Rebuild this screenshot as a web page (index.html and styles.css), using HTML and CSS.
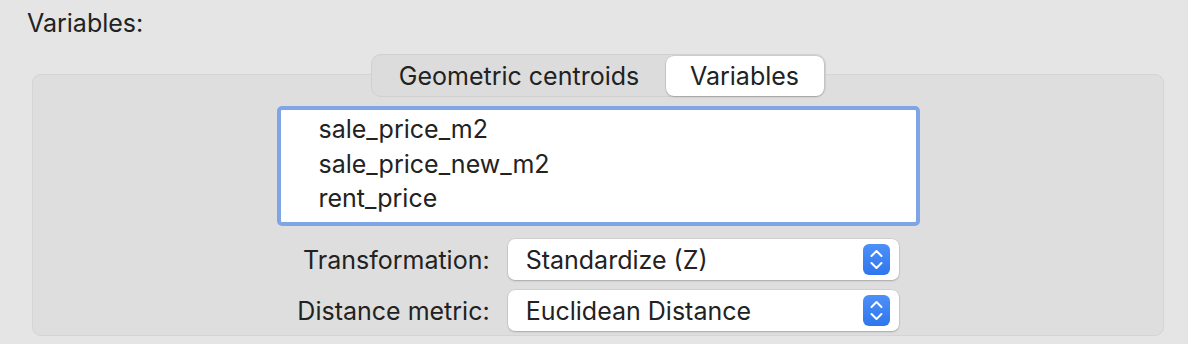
FILE: index.html
```html
<!DOCTYPE html>
<html lang="en">
<head>
  <meta charset="utf-8">
  <link rel="stylesheet" href="styles.css">
  <title>Variables</title>
</head>
<body>
  <div class="title">Variables:</div>

  <section class="group">
    <div class="segmented">
      <span class="seg">Geometric centroids</span>
      <span class="seg active">Variables</span>
    </div>

    <div class="listbox">
      <div class="item">sale_price_m2</div>
      <div class="item">sale_price_new_m2</div>
      <div class="item">rent_price</div>
    </div>

    <div class="form">
      <label>Transformation:</label>
      <div class="select">
        <span>Standardize (Z)</span>
        <span class="stepper">
          <svg width="27" height="31" viewBox="0 0 27 31"><path d="M8.5 12 L13.5 7 L18.5 12 M8.5 19 L13.5 24 L18.5 19" fill="none" stroke="#fff" stroke-width="2" stroke-linecap="round" stroke-linejoin="round"/></svg>
        </span>
      </div>
      <label>Distance metric:</label>
      <div class="select">
        <span>Euclidean Distance</span>
        <span class="stepper">
          <svg width="27" height="31" viewBox="0 0 27 31"><path d="M8.5 12 L13.5 7 L18.5 12 M8.5 19 L13.5 24 L18.5 19" fill="none" stroke="#fff" stroke-width="2" stroke-linecap="round" stroke-linejoin="round"/></svg>
        </span>
      </div>
    </div>
  </section>
</body>
</html>
```

FILE: styles.css
```css
body {
  margin: 0;
  background-color: #e5e5e5;
  font-family: Inter, "Noto Sans", sans-serif;
  font-size: 25px;
  color: #222;
}

.title {
  padding: 8px 0 0 27px;
  height: 38px;
  line-height: 30px;
}

.group {
  margin: 28px 0 0 32px;
  width: 1130px;
  height: 260px;
  background: #dedede;
  border: 1px solid #d4d4d4;
  border-radius: 9px;
  display: flex;
  flex-direction: column;
  align-items: center;
}

.segmented {
  margin-top: -21px;
  display: flex;
  align-items: center;
  height: 41px;
  padding: 0 1px;
  background: #dcdcdc;
  border: 1px solid #d0d0d0;
  border-radius: 10px;
}

.seg {
  height: 40px;
  line-height: 40px;
  text-align: center;
}

.seg:first-child {
  width: 293px;
}

.seg.active {
  width: 158px;
  background: #fff;
  border-radius: 8px;
  box-shadow: 0 0 0 0.5px rgba(0, 0, 0, 0.12), 0 1px 2px rgba(0, 0, 0, 0.18);
}

.listbox {
  margin-top: 9px;
  width: 635px;
  height: 108px;
  background: #fff;
  border: 4px solid #7fa5e7;
  border-radius: 5px;
  padding: 2px 0;
  box-sizing: content-box;
}

.item {
  padding-left: 38px;
  height: 34.5px;
  line-height: 34px;
}

.form {
  margin-top: 13px;
  display: grid;
  grid-template-columns: auto 391px;
  column-gap: 18px;
  row-gap: 10px;
  align-items: center;
}

.form label {
  text-align: right;
}

.select {
  height: 41px;
  background: #fff;
  border-radius: 7px;
  box-shadow: 0 0 0 0.5px rgba(0, 0, 0, 0.1), 0 1px 2px rgba(0, 0, 0, 0.2);
  display: flex;
  align-items: center;
  justify-content: space-between;
  padding: 0 9px 0 18px;
}

.stepper {
  width: 27px;
  height: 31px;
  border-radius: 6px;
  background: linear-gradient(#4c90f8, #2f76ee);
  display: flex;
}
```
